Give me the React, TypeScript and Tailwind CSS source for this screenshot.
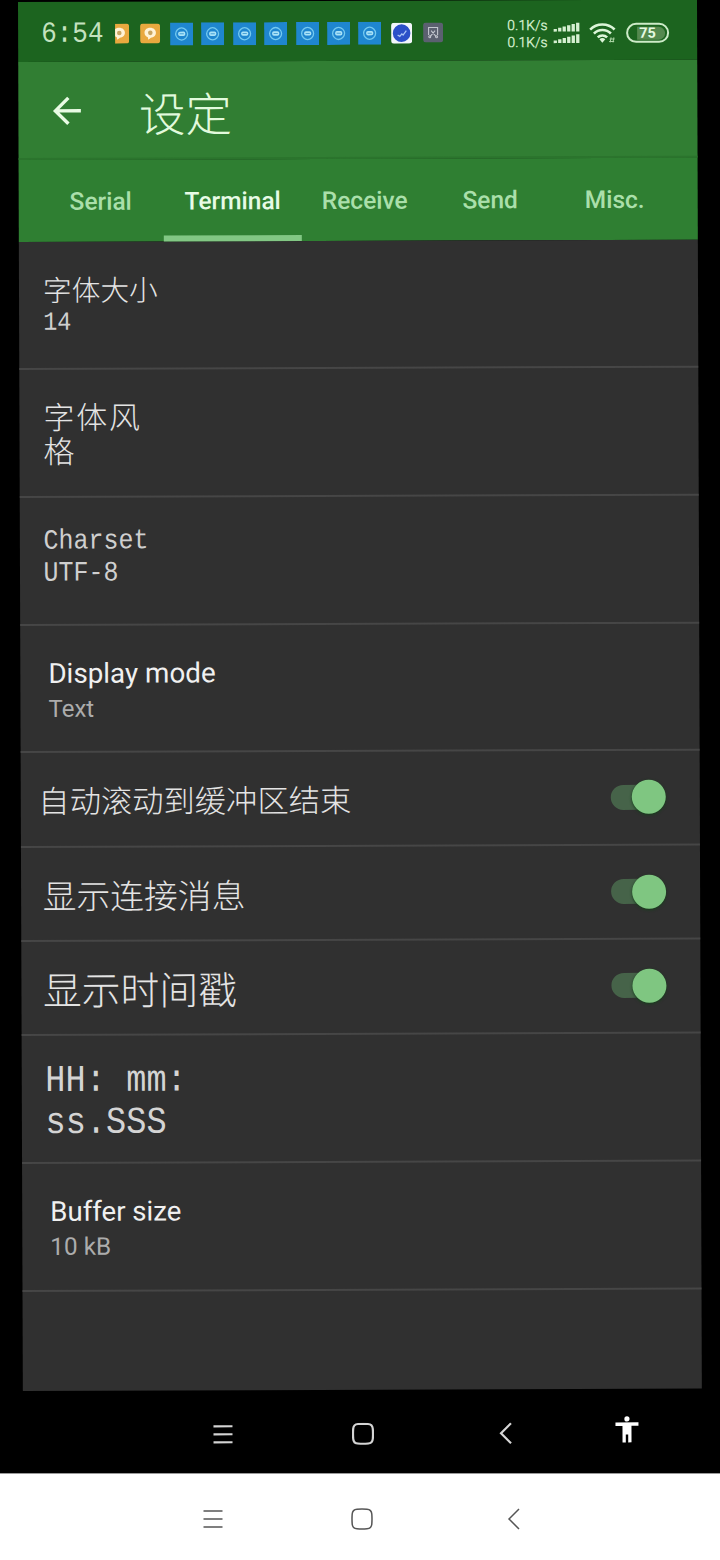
import type { ReactNode } from "react";

const cjk = "font-['Noto_Sans_CJK_SC',sans-serif] font-light";
const mono = "font-['Liberation_Mono','Noto_Sans_CJK_SC',monospace] scale-y-[1.12]";
const roboto = "font-['Roboto',sans-serif]";

function OrangeIcon({ clipped = false }: { clipped?: boolean }) {
  return (
    <svg
      className="block shrink-0"
      width={clipped ? 14 : 20}
      height="20"
      viewBox={clipped ? "6 0 14 20" : "0 0 20 20"}
    >
      <rect width="20" height="20" rx="3" fill="#e9a93f" />
      <path d="M10 4.2c3.600 0 5.800 2.200 5.800 5s-2.200 4.800-5 4.900L8.200 16.200 7.700 13.600C5.600 12.900 4.400 11.300 4.400 9.200c0-2.800 2.200-5 5.600-5z" fill="#fff3d6" />
      <circle cx="10.200" cy="9.300" r="2.300" fill="#c9a661" />
    </svg>
  );
}

function BlueIcon() {
  return (
    <svg className="block" width="23" height="23" viewBox="0 0 23 23">
      <rect width="23" height="23" fill="#1f86cf" />
      <path d="M11.500 5.400c3 0 6 3 6 6.100s-3 6.100-6 6.100-6-3-6-6.100 3-6.100 6-6.100z" fill="none" stroke="#74c9ef" strokeWidth="1.300" />
      <rect x="8" y="9.200" width="7.200" height="4.400" rx="1.800" fill="#a9e2f7" />
      <path d="M9.500 11.400h4.200" stroke="#4aa3d8" strokeWidth="1" />
    </svg>
  );
}

function CheckIcon() {
  return (
    <svg className="block" width="21" height="21" viewBox="0 0 21 21">
      <rect width="21" height="21" rx="3" fill="#f2f6fb" />
      <circle cx="10.500" cy="10.500" r="8.800" fill="#2b50c8" />
      <path d="M6.500 12.300l2.200 1.500 2-2.600 1.300 1.200 3.200-4.400" fill="none" stroke="#a9c4f5" strokeWidth="1.300" />
    </svg>
  );
}

function GrayIcon() {
  return (
    <svg className="block" width="20" height="20" viewBox="0 0 20 20">
      <rect width="20" height="20" rx="3" fill="#5b6070" />
      <path d="M5.500 12.500V5h9v7.500M8 8l5 6M12 8l-5 6" fill="none" stroke="#c3c6cf" strokeWidth="1.100" />
      <circle cx="6.600" cy="14.300" r="1" fill="none" stroke="#c3c6cf" />
      <circle cx="13.400" cy="14.300" r="1" fill="none" stroke="#c3c6cf" />
    </svg>
  );
}

function Cell({ children }: { children: ReactNode }) {
  return <div className="flex w-[31.4px] shrink-0 justify-center">{children}</div>;
}

function Signal() {
  const bars = [0, 1, 2, 3, 4, 5];
  return (
    <svg className="block" width="27" height="22" viewBox="0 0 27 22">
      {[9.5, 21].map((base) =>
        bars.map((i) => {
          const h = 2.6 + i * 1.25;
          return <rect key={`${base}-${i}`} x={0.5 + i * 4.5} y={base - h} width="3.3" height={h} fill="#d6f0d2" />;
        })
      )}
    </svg>
  );
}

function Wifi() {
  return (
    <svg className="block" width="28" height="22" viewBox="0 0 28 22">
      <g fill="none" stroke="#dcf5d8" strokeWidth="2.600">
        <path d="M1 7.600a17.500 17.500 0 0 1 24.500 0" />
        <path d="M4.800 11.600a12 12 0 0 1 17 0" />
        <path d="M8.600 15.400a6.700 6.700 0 0 1 9.400 0" />
      </g>
      <path d="M10.300 17.400a4.200 4.200 0 0 1 5.900 0L13.200 20.800z" fill="#dcf5d8" />
      <path d="M20.500 17h5M20 19.500h5M22 15.500l-1 5M24.800 15.500l-1 5" stroke="#a9d3a3" strokeWidth="1" />
    </svg>
  );
}

function Battery() {
  return (
    <div className="relative flex h-[20px] w-[43px] items-center justify-center overflow-hidden rounded-full border-2 border-[#cdebc8]">
      <div className="absolute inset-y-[1.5px] left-[9px] right-[2px] rounded-r-full bg-[#55894f]" />
      <span className={`${roboto} relative mt-[2px] text-[14.5px] font-bold leading-none text-[#e6fae2]`}>75</span>
    </div>
  );
}

function StatusBar() {
  return (
    <div className="flex h-[60px] items-center bg-[#1c641f]">
      <div className={`${mono} ml-[23px] mt-[4px] w-[74px] text-[26px] leading-[56px] text-[#c4e2bf]`}>6:54</div>
      <div className="mt-[4px] flex w-[391px] items-center">
        <div className="w-[19.500px]">
          <OrangeIcon clipped />
        </div>
        <Cell><OrangeIcon /></Cell>
        {[0, 1, 2, 3, 4, 5, 6].map((i) => (
          <Cell key={i}><BlueIcon /></Cell>
        ))}
        <Cell><CheckIcon /></Cell>
        <Cell><GrayIcon /></Cell>
      </div>
      <div className={`${roboto} mt-[7px] w-[47px] whitespace-nowrap pl-[1px] text-[14.500px] leading-[17px] tracking-[-0.4px] text-[#cdebc8]`}>
        <div>0.1K/s</div>
        <div>0.1K/s</div>
      </div>
      <div className="mt-[6px] flex items-center">
        <div className="w-[36px]"><Signal /></div>
        <div className="w-[37px]"><Wifi /></div>
        <Battery />
      </div>
    </div>
  );
}

function Toolbar() {
  return (
    <div className="flex h-[98px] items-center border-b-2 border-[#2b742d] bg-[#317e33]">
      <svg className="ml-[34px] mt-[2px] block" width="30" height="30" viewBox="0 0 30 30" fill="none" stroke="#e9fbe4" strokeWidth="3.400">
        <path d="M28.500 15H3M16 2L3 15l13 13" />
      </svg>
      <h1 className={`${cjk} ml-[56.5px] mt-[3px] text-[46.500px] leading-[60px] text-[#e2fadd]`}>设定</h1>
    </div>
  );
}

function Tabs() {
  const base = `${roboto} flex h-full items-center justify-center text-[24.500px] font-medium`;
  const idle = "pt-[3px] text-[#aadfaa]";
  return (
    <div className="flex h-[82px] bg-[#2f7f32] pl-[19px]">
      <div className={`${base} ${idle} w-[126px]`}>Serial</div>
      <div className={`${base} w-[138px] border-b-[6px] border-[#82c784] pt-[9px] text-[#e8fbe6]`}>Terminal</div>
      <div className={`${base} ${idle} w-[126px]`}>Receive</div>
      <div className={`${base} ${idle} w-[125px]`}>Send</div>
      <div className={`${base} ${idle} w-[124px]`}>Misc.</div>
    </div>
  );
}

function Toggle() {
  return (
    <div className="mr-[34px] flex h-[34px] w-[55px] items-center">
      <div className="h-[25px] w-[40px] rounded-full bg-[#466349]" />
      <div className="-ml-[19px] h-[34px] w-[34px] shrink-0 rounded-full bg-[#7fc681] shadow-[0_1px_3px_#14401a]" />
    </div>
  );
}

function Row({ height, children }: { height: string; children: ReactNode }) {
  return <div className={`${height} border-b-2 border-[#464646] text-[#e4e4e4]`}>{children}</div>;
}

function SwitchRow({ height, label, text }: { height: string; label: string; text: string }) {
  return (
    <Row height={height}>
      <div className="flex h-full items-center justify-between">
        <span className={`${cjk} whitespace-nowrap leading-none ${text}`}>{label}</span>
        <Toggle />
      </div>
    </Row>
  );
}

function NavIcons({ kind }: { kind: "menu" | "home" | "back" }) {
  return (
    <svg className="block" width="22" height="22" viewBox="0 0 22 22" fill="none" stroke="currentColor">
      {kind === "menu" && <path d="M1.500 3h19M1.500 11h19M1.500 19h19" />}
      {kind === "home" && <path d="M6 1.200Q11 0.800 16 1.200Q20.500 1.500 20.800 6Q21.200 11 20.800 16Q20.500 20.500 16 20.800Q11 21.200 6 20.800Q1.500 20.500 1.200 16Q0.800 11 1.200 6Q1.500 1.500 6 1.200z" />}
      {kind === "back" && <path d="M16 1L6 11l10 10" />}
    </svg>
  );
}

export default function App() {
  return (
    <div className="h-[1560px] w-[720px] overflow-hidden bg-white">
      <div className="h-[1473px] overflow-hidden bg-black pl-[18px] pt-[2px]">
        <div className="w-[679px] origin-top-left rotate-[-0.2deg]">
          <StatusBar />
          <Toolbar />
          <Tabs />
          <div className="h-[1149px] bg-[#303030]">
            <Row height="h-[128px]">
              <div className="pl-[24px] pt-[29.500px]">
                <div className={`${cjk} text-[28.700px] leading-[34px]`}>字体大小</div>
                <div className={`${mono} pt-[1px] text-[23.500px] leading-[32px] text-[#cfcfcf]`}>14</div>
              </div>
            </Row>
            <Row height="h-[128px]">
              <div className={`${cjk} w-[130px] pl-[24px] pt-[29px] text-[31px] leading-[34px] tracking-[1.800px]`}>字体风格</div>
            </Row>
            <Row height="h-[128px]">
              <div className="pl-[23.500px] pt-[28px] text-[25px] leading-[32px] text-[#cfcfcf]">
                <div className={mono}>Charset</div>
                <div className={mono}>UTF-8</div>
              </div>
            </Row>
            <Row height="h-[127px]">
              <div className={`${roboto} pl-[28px] pt-[29.500px]`}>
                <div className="text-[27.800px] leading-[36px] text-[#f0f0f0]">Display mode</div>
                <div className="text-[24px] leading-[34px] text-[#acacac]">Text</div>
              </div>
            </Row>
            <SwitchRow height="h-[94.500px]" label="自动滚动到缓冲区结束" text="pl-[17.5px] pt-[1px] text-[31.300px]" />
            <SwitchRow height="h-[94px]" label="显示连接消息" text="pl-[21.5px] pt-[2px] text-[33.800px]" />
            <SwitchRow height="h-[94.500px]" label="显示时间戳" text="pl-[21.5px] pt-[2px] text-[38.800px]" />
            <Row height="h-[128px]">
              <div className="pl-[23.500px] pt-[23.500px] text-[33.700px] text-[#d4d4d4]">
                <div className={`${mono} whitespace-pre leading-[42px]`}>HH: mm:</div>
                <div className={`${mono} leading-[42px]`}>ss.SSS</div>
              </div>
            </Row>
            <Row height="h-[127.500px]">
              <div className={`${roboto} pl-[28px] pt-[30px]`}>
                <div className="text-[27.600px] leading-[36px] text-[#f0f0f0]">Buffer size</div>
                <div className="text-[24.300px] leading-[34px] text-[#acacac]">10 kB</div>
              </div>
            </Row>
          </div>
          <div className="flex h-[87px] items-center stroke-[2.2] text-[#d4d4d4]">
            <div className="ml-[188.500px] w-[140px]"><NavIcons kind="menu" /></div>
            <div className="w-[143px]"><NavIcons kind="home" /></div>
            <div className="w-[119px]"><NavIcons kind="back" /></div>
            <svg className="-mt-[6px] block" width="26" height="28" viewBox="0 0 26 28" fill="#fff">
              <circle cx="13" cy="3" r="2.600" />
              <path d="M1.500 6.500h23v3.500H17.500v16.500h-3.300v-8h-2.400v8H8.500V10h-7z" />
            </svg>
          </div>
        </div>
      </div>
      <div className="flex h-[87px] items-center border-t border-[#9a9a9a] pt-[4px] stroke-[1.5] text-[#555555]">
        <div className="ml-[202px] w-[149px]"><NavIcons kind="menu" /></div>
        <div className="w-[151.5px]"><NavIcons kind="home" /></div>
        <NavIcons kind="back" />
      </div>
    </div>
  );
}
